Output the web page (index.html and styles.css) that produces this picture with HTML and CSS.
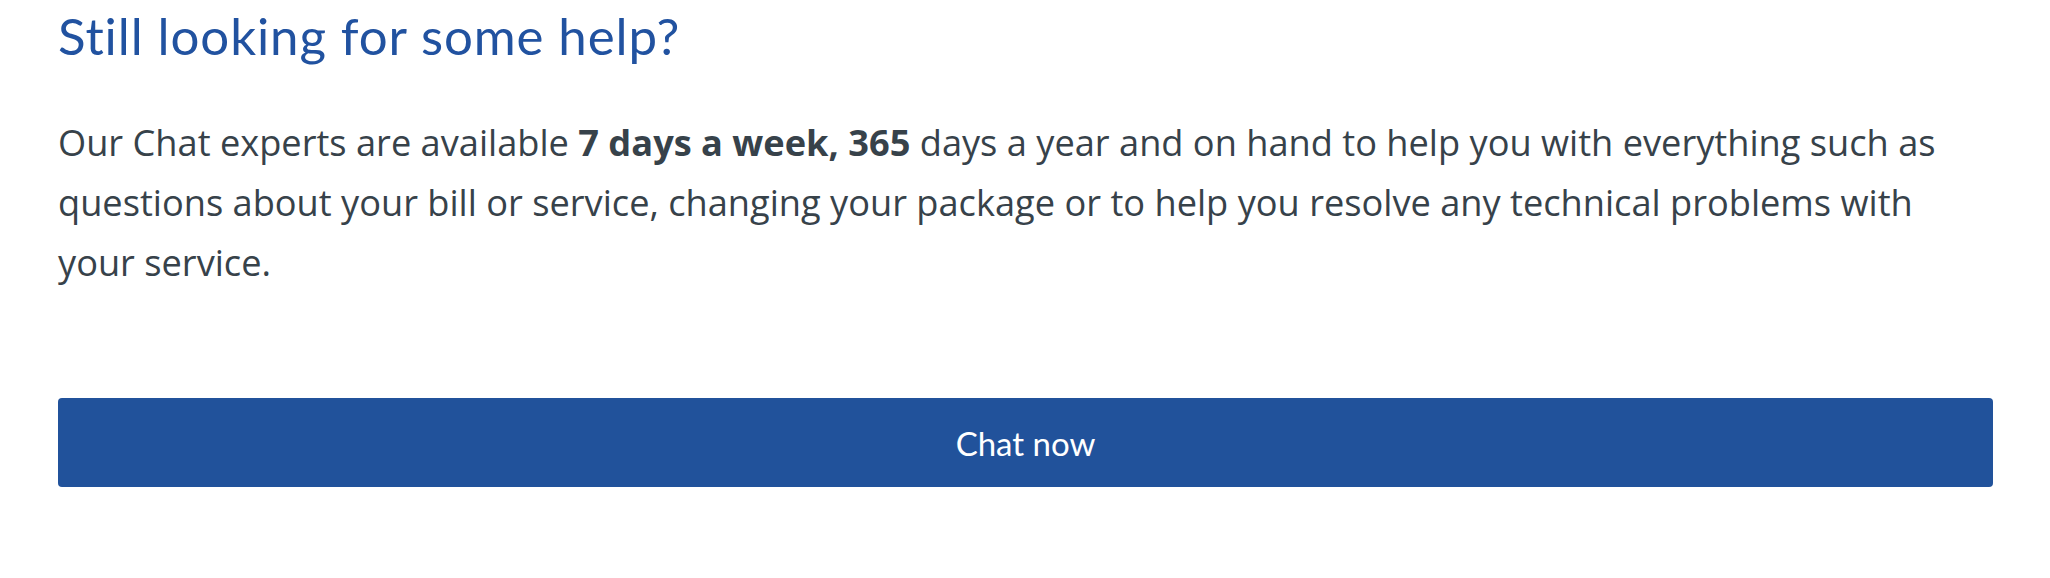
FILE: index.html
```html
<!DOCTYPE html>
<html lang="en">
<head>
<meta charset="utf-8">
<title>Still looking for some help?</title>
<link rel="stylesheet" href="styles.css">
</head>
<body>
<section class="help">
  <h2 class="help__title">Still looking for some help?</h2>
  <p class="help__text">Our Chat experts are available <strong>7 days a week, 365</strong> days a year and on hand to help you with everything such as questions about your bill or service, changing your package or to help you resolve any technical problems with your service.</p>
  <a class="help__button" href="#">Chat now</a>
</section>
</body>
</html>
```

FILE: styles.css
```css
html, body {
  margin: 0;
  padding: 0;
  background: #ffffff;
}

.help {
  padding: 6px 57px 0 58px;
  width: 1935px;
}

.help__title {
  margin: 0;
  font-family: Lato, "Open Sans", sans-serif;
  font-weight: 400;
  font-size: 51px;
  letter-spacing: 0.9px;
  line-height: 60px;
  color: #2152a0;
}

.help__text {
  margin: 46px 0 0;
  font-family: "Open Sans", sans-serif;
  font-size: 36.2px;
  line-height: 60px;
  color: #37424a;
}

.help__text strong {
  font-weight: 700;
}

.help__button {
  margin-top: 106px;
  display: flex;
  align-items: center;
  justify-content: center;
  height: 89px;
  border-radius: 4px;
  background: #21529b;
  color: #ffffff;
  font-family: Lato, sans-serif;
  font-size: 33px;
  text-decoration: none;
}
```
